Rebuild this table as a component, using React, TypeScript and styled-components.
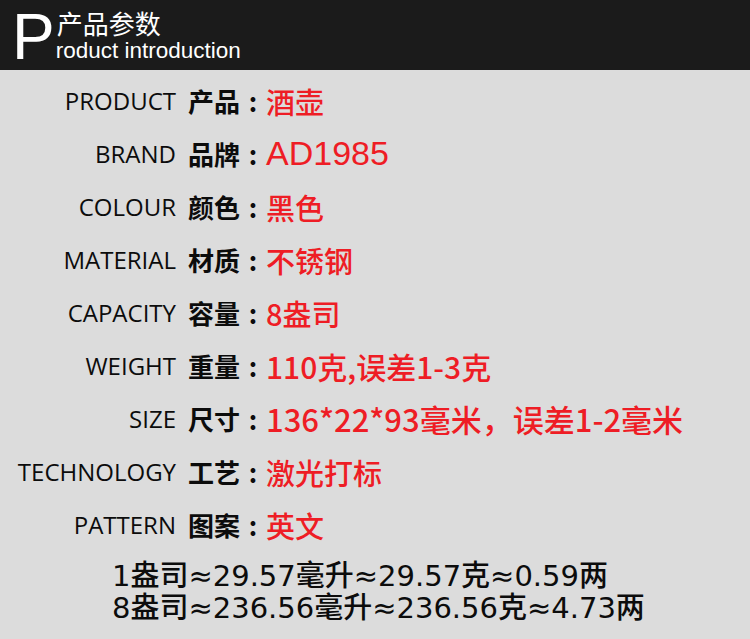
import React from "react";
import styled, { createGlobalStyle } from "styled-components";

const Global = createGlobalStyle`
  html, body { margin: 0; padding: 0; }
  body { background: #dcdcdc; width: 750px; height: 639px; overflow: hidden; }
`;

const Page = styled.div`
  width: 750px;
  height: 639px;
  background: #dcdcdc;
  display: flex;
  flex-direction: column;
`;

const Header = styled.header`
  height: 70px;
  background: #1b1b1b;
  display: flex;
  align-items: flex-start;
  padding-left: 12px;
  box-sizing: border-box;
  color: #fff;
`;

const BigP = styled.div`
  font-family: "Liberation Sans", Arial, sans-serif;
  font-size: 64px;
  line-height: 74px;
  height: 70px;
`;

const HeadText = styled.div`
  display: flex;
  flex-direction: column;
  padding-top: 7px;
`;

const HeadCn = styled.div`
  font-family: "Noto Sans CJK SC", sans-serif;
  font-size: 26px;
  line-height: 32px;
  margin-left: 2px;
`;

const HeadEn = styled.div`
  font-family: "Liberation Sans", Arial, sans-serif;
  font-size: 22.5px;
  line-height: 24px;
  margin-left: 1px;
`;

const List = styled.div`
  display: flex;
  flex-direction: column;
  padding-top: 4px;
`;

const Row = styled.div`
  height: 53px;
  display: grid;
  grid-template-columns: 176px 12px auto 26px 1fr;
  align-items: center;
`;

const EnLabel = styled.div`
  grid-column: 1;
  justify-self: end;
  font-family: "Open Sans", sans-serif;
  font-size: 24px;
  color: #0c0c0c;
  white-space: nowrap;
`;

const CnLabel = styled.div`
  grid-column: 3;
  font-family: "Noto Sans CJK SC", sans-serif;
  font-weight: 700;
  font-size: 26px;
  color: #0c0c0c;
  white-space: nowrap;
`;

const Colon = styled.div`
  grid-column: 4;
  text-align: center;
  font-family: "Noto Sans CJK SC", sans-serif;
  font-weight: 700;
  font-size: 26px;
  color: #0c0c0c;
`;

const Value = styled.div<{ $size?: number; $latin?: boolean }>`
  grid-column: 5;
  font-family: ${(p) =>
    p.$latin ? '"Liberation Sans", Arial, sans-serif' : '"Noto Sans CJK SC", sans-serif'};
  font-weight: ${(p) => (p.$latin ? 400 : 500)};
  font-size: ${(p) => p.$size ?? 29}px;
  color: #ee1d25;
  white-space: nowrap;
`;

const Notes = styled.p`
  margin: 9px 0 0 0;
  padding-left: 112px;
  font-family: "DejaVu Sans", "Noto Sans CJK SC", sans-serif;
  font-weight: 500;
  font-size: 29px;
  line-height: 32px;
  color: #0c0c0c;
  white-space: nowrap;
`;

type Item = {
  en: string;
  cn: string;
  value: string;
  size?: number;
  latin?: boolean;
};

const items: Item[] = [
  { en: "PRODUCT", cn: "产品", value: "酒壶" },
  { en: "BRAND", cn: "品牌", value: "AD1985", latin: true, size: 34 },
  { en: "COLOUR", cn: "颜色", value: "黑色" },
  { en: "MATERIAL", cn: "材质", value: "不锈钢" },
  { en: "CAPACITY", cn: "容量", value: "8盎司" },
  { en: "WEIGHT", cn: "重量", value: "110克,误差1-3克", size: 30 },
  { en: "SIZE", cn: "尺寸", value: "136*22*93毫米，误差1-2毫米", size: 31 },
  { en: "TECHNOLOGY", cn: "工艺", value: "激光打标" },
  { en: "PATTERN", cn: "图案", value: "英文" },
];

export default function App() {
  return (
    <Page>
      <Global />
      <Header>
        <BigP>P</BigP>
        <HeadText>
          <HeadCn>产品参数</HeadCn>
          <HeadEn>roduct introduction</HeadEn>
        </HeadText>
      </Header>
      <List>
        {items.map((it) => (
          <Row key={it.en}>
            <EnLabel>{it.en}</EnLabel>
            <CnLabel>{it.cn}</CnLabel>
            <Colon>:</Colon>
            <Value $size={it.size} $latin={it.latin}>
              {it.value}
            </Value>
          </Row>
        ))}
      </List>
      <Notes>
        1盎司≈29.57毫升≈29.57克≈0.59两
        <br />
        8盎司≈236.56毫升≈236.56克≈4.73两
      </Notes>
    </Page>
  );
}
